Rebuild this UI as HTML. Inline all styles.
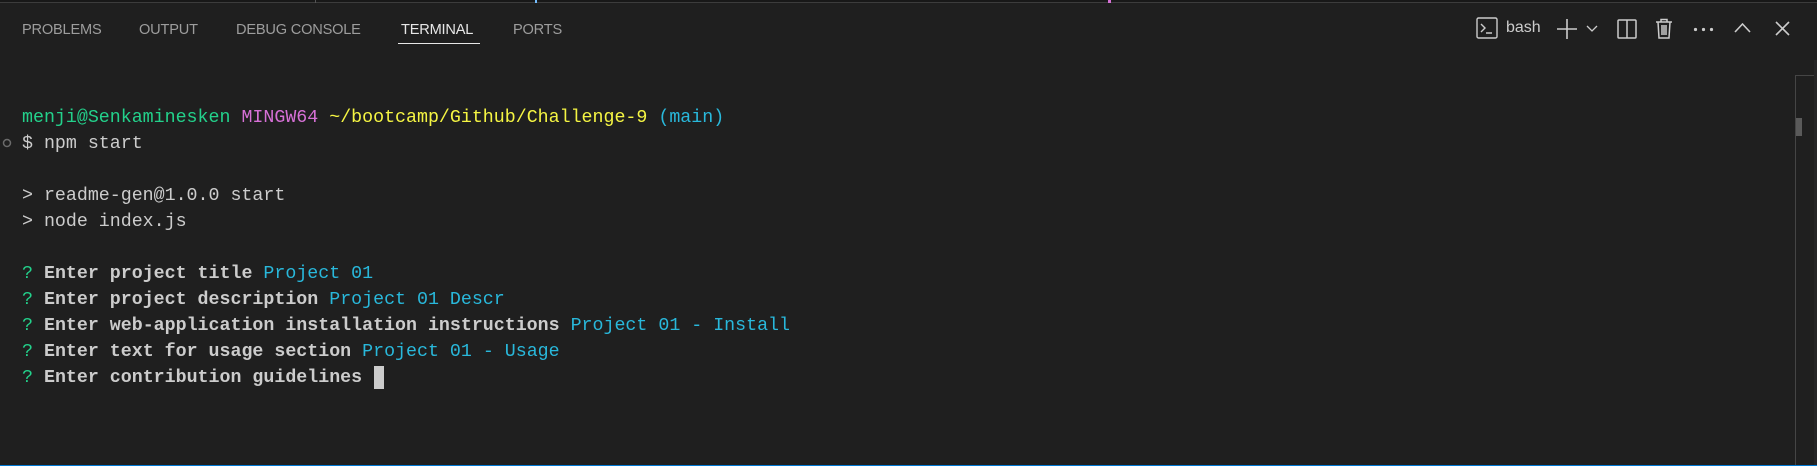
<!DOCTYPE html>
<html><head><meta charset="utf-8"><style>
html,body{margin:0;padding:0;}
body{width:1817px;height:466px;background:#1f1f1f;position:relative;overflow:hidden;font-family:"Liberation Sans",sans-serif;}
.tab{position:absolute;top:21px;font-size:14.6px;color:#9d9d9d;letter-spacing:-0.2px;line-height:18px;}
.term{position:absolute;left:22px;top:105px;font-family:"Liberation Mono",monospace;font-size:18.3px;line-height:26px;color:#cccccc;white-space:pre;}
.b{font-weight:bold;}
.g{color:#23d18b}.m{color:#d670d6}.y{color:#f5f543}.c{color:#29b8db}
svg{position:absolute;}
</style></head><body>
<div style="position:absolute;left:0;top:0;width:1817px;height:2px;background:#181818"></div>
<div style="position:absolute;left:0;top:2px;width:1817px;height:1px;background:#3c3c3c"></div>
<div style="position:absolute;left:315px;top:0;width:1px;height:3px;background:#555"></div>
<div style="position:absolute;left:535px;top:0;width:2px;height:3px;background:#75beff"></div>
<div style="position:absolute;left:1108px;top:0;width:3px;height:3px;background:#d670d6"></div>

<div class="tab" style="left:22px">PROBLEMS</div>
<div class="tab" style="left:139px">OUTPUT</div>
<div class="tab" style="left:236px">DEBUG CONSOLE</div>
<div class="tab" style="left:401px;color:#e7e7e7">TERMINAL</div>
<div style="position:absolute;left:398px;top:43px;width:82px;height:1px;background:#e7e7e7"></div>
<div class="tab" style="left:513px">PORTS</div>

<svg style="left:1476px;top:17px" width="23" height="23" viewBox="0 0 23 23" fill="none" stroke="#cccccc" stroke-width="1.4"><rect x="1" y="1" width="20" height="20" rx="1.5"/><path d="M5 7l4 4-4 4M10 16h6"/></svg>
<div style="position:absolute;left:1506px;top:19px;font-size:16px;color:#cccccc">bash</div>
<svg style="left:1556px;top:18px" width="22" height="22" viewBox="0 0 22 22" stroke="#cccccc" stroke-width="1.6"><path d="M11 1v20M1 11h20"/></svg>
<svg style="left:1586px;top:25px" width="12" height="8" viewBox="0 0 12 8" fill="none" stroke="#cccccc" stroke-width="1.3"><path d="M1 1l5 5 5-5"/></svg>
<svg style="left:1617px;top:19px" width="20" height="20" viewBox="0 0 20 20" fill="none" stroke="#cccccc" stroke-width="1.5"><rect x="1" y="1" width="18" height="18" rx="1"/><path d="M10 1v18"/></svg>
<svg style="left:1655px;top:18px" width="18" height="21" viewBox="0 0 18 21" fill="none" stroke="#cccccc" stroke-width="1.5"><path d="M1 4h16M6 4V1.5h6V4M3 4l1 16h10l1-16M7 7v10M9 7v10M11 7v10"/></svg>
<svg style="left:1693px;top:27px" width="21" height="5" viewBox="0 0 21 5" fill="#cccccc"><circle cx="2.5" cy="2.5" r="1.6"/><circle cx="10.5" cy="2.5" r="1.6"/><circle cx="18.5" cy="2.5" r="1.6"/></svg>
<svg style="left:1734px;top:22px" width="17" height="11" viewBox="0 0 17 11" fill="none" stroke="#cccccc" stroke-width="1.6"><path d="M1 10l7.5-8 7.5 8"/></svg>
<svg style="left:1775px;top:21px" width="15" height="15" viewBox="0 0 15 15" stroke="#cccccc" stroke-width="1.6"><path d="M1 1l13 13M14 1L1 14"/></svg>

<div style="position:absolute;left:1795px;top:75px;width:1px;height:391px;background:#454545"></div>
<div style="position:absolute;left:1795px;top:75px;width:19px;height:1px;background:#454545"></div>
<div style="position:absolute;left:1796px;top:118px;width:6px;height:18px;background:#5a5a5a"></div>
<div style="position:absolute;left:1814px;top:60px;width:3px;height:406px;background:#252526"></div>
<div style="position:absolute;left:0;top:465px;width:1817px;height:1px;background:#0078d4"></div>

<svg style="left:2px;top:138px" width="10" height="10" viewBox="0 0 10 10" fill="none" stroke="#6b6b6b" stroke-width="1.5"><circle cx="5" cy="5" r="3.5"/></svg>

<div class="term"><span class="g">menji@Senkaminesken</span> <span class="m">MINGW64</span> <span class="y">~/bootcamp/Github/Challenge-9</span> <span class="c">(main)</span>
$ npm start

&gt; readme-gen@1.0.0 start
&gt; node index.js

<span class="g">?</span> <span class="b">Enter project title</span> <span class="c">Project 01</span>
<span class="g">?</span> <span class="b">Enter project description</span> <span class="c">Project 01 Descr</span>
<span class="g">?</span> <span class="b">Enter web-application installation instructions</span> <span class="c">Project 01 - Install</span>
<span class="g">?</span> <span class="b">Enter text for usage section</span> <span class="c">Project 01 - Usage</span>
<span class="g">?</span> <span class="b">Enter contribution guidelines</span> </div>
<div style="position:absolute;left:374px;top:366px;width:10px;height:23px;background:#cccccc"></div>
</body></html>
